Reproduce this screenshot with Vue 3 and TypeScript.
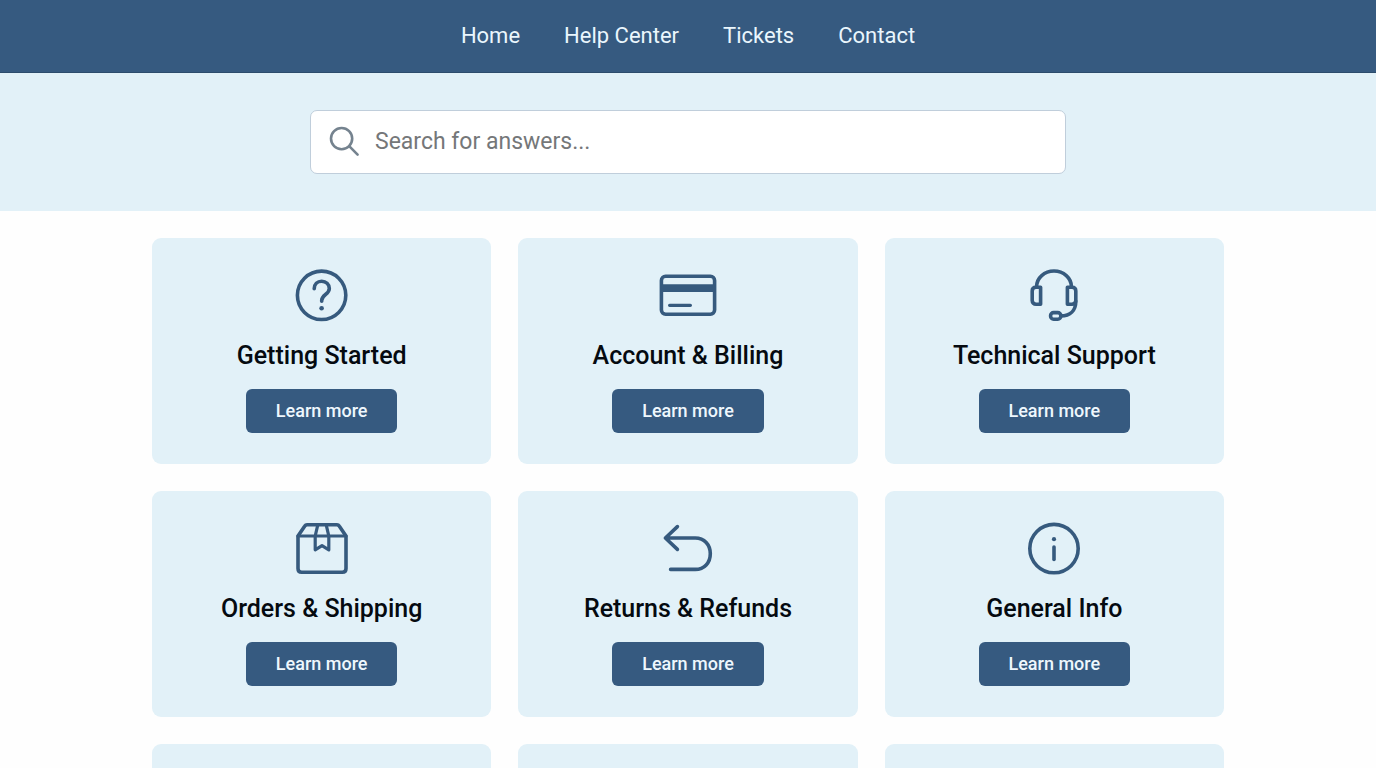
<script setup lang="ts">
type IconName = 'question' | 'card' | 'headset' | 'box' | 'return' | 'info'

interface Topic {
  title: string
  icon: IconName
}

const links: string[] = ['Home', 'Help Center', 'Tickets', 'Contact']

const topics: Topic[] = [
  { title: 'Getting Started', icon: 'question' },
  { title: 'Account & Billing', icon: 'card' },
  { title: 'Technical Support', icon: 'headset' },
  { title: 'Orders & Shipping', icon: 'box' },
  { title: 'Returns & Refunds', icon: 'return' },
  { title: 'General Info', icon: 'info' },
]
</script>

<template>
  <div class="page">
    <header class="topbar">
      <nav class="nav" aria-label="Main">
        <a v-for="link in links" :key="link" class="nav-link" href="#">{{ link }}</a>
      </nav>
    </header>

    <section class="hero">
      <form class="search" role="search" @submit.prevent>
        <label class="search-label" for="search-input">
          <svg class="search-icon" viewBox="0 0 32 32" aria-hidden="true">
            <circle cx="12.6" cy="12.6" r="10.6" />
            <path d="M20.2 20.2 28.6 28.6" />
          </svg>
        </label>
        <input
          id="search-input"
          class="search-input"
          type="text"
          placeholder="Search for answers..."
          aria-label="Search for answers"
        />
      </form>
    </section>

    <main class="topics">
      <article v-for="topic in topics" :key="topic.title" class="card">
        <svg class="icon" viewBox="0 0 80 70" aria-hidden="true">
          <template v-if="topic.icon === 'question'">
            <circle cx="39.6" cy="35.3" r="24.2" />
            <path d="M32.2 28.8c0-4.6 3.2-7.6 7.5-7.6s7.6 3 7.6 7.2c0 6.2-7.6 6-7.6 12.2v.6" />
            <circle class="solid" cx="39.6" cy="48.2" r="2.3" />
          </template>
          <template v-else-if="topic.icon === 'card'">
            <rect x="13.4" y="16.2" width="53.2" height="38" rx="4.2" />
            <path class="solid" d="M13.4 24.2h53.2v7.8h-53.2z" />
            <path class="fine" d="M21.6 45.3h20.8" />
          </template>
          <template v-else-if="topic.icon === 'headset'">
            <path d="M22.6 27.2v-.6a17.4 15.6 0 0 1 34.8 0v.6" />
            <path d="M26.6 27.2v17h-4.6c-2.3 0-3.8-1.5-3.8-3.6v-9.7c0-2.3 1.5-3.7 3.8-3.7z" />
            <path d="M53.4 27.2v17h4.6c2.3 0 3.8-1.5 3.8-3.6v-9.7c0-2.3-1.5-3.7-3.8-3.7z" />
            <path d="M61.8 41.2c0 9-5.4 14.7-15 14.7" />
            <rect x="36.6" y="52.6" width="10.2" height="6.6" rx="3" />
          </template>
          <template v-else-if="topic.icon === 'box'">
            <path d="M16 23 22.8 13c.5-.8 1.2-1.2 2.2-1.2h30c1 0 1.7.4 2.2 1.2L64 23v32.6c0 2.3-1.4 3.7-3.7 3.7H19.7c-2.3 0-3.7-1.4-3.7-3.7z" />
            <path class="fine" d="M16 23h48M35.8 11.8 33.2 23v13.8l6.8-4.1 6.8 4.1V23l-2.6-11.2" />
          </template>
          <template v-else-if="topic.icon === 'return'">
            <path d="M29.4 13.6 17.4 25l12 11.4M17.4 25h29.9c9 0 15 6.7 15 15.7s-6 15.7-15 15.7H22.6" />
          </template>
          <template v-else>
            <circle cx="40" cy="35.6" r="24.2" />
            <circle class="solid" cx="40" cy="26.2" r="2.1" />
            <path d="M40 34v12.4" />
          </template>
        </svg>
        <h2 class="title">{{ topic.title }}</h2>
        <button class="more" type="button">Learn more</button>
      </article>
      <div v-for="n in 3" :key="n" class="card" />
    </main>
  </div>
</template>

<style>
body {
  margin: 0;
  background: #fefefe;
}
</style>

<style scoped>
.page {
  height: 100vh;
  overflow: hidden;
  background: #fefefe;
  color: #050a10;
  font-family: Roboto, "Liberation Sans", sans-serif;
}

.topbar {
  box-sizing: border-box;
  padding: 20px 24px;
  background: #365a80;
  border-bottom: 1px solid #2c4c6c;
}

.nav {
  display: flex;
  justify-content: center;
  gap: 44px;
}

.nav-link {
  color: #eaf6fd;
  font-size: 22px;
  line-height: 32px;
  text-decoration: none;
}

.hero {
  padding: 37px 24px;
  background: #e2f1f8;
}

.search {
  box-sizing: border-box;
  display: flex;
  align-items: center;
  gap: 14px;
  max-width: 756px;
  height: 64px;
  margin: 0 auto;
  padding: 0 18px;
  background: #fff;
  border: 1px solid #c0cedb;
  border-radius: 7px;
}

.search-label {
  display: flex;
}

.search-icon {
  width: 32px;
  height: 32px;
  fill: none;
  stroke: #75838f;
  stroke-width: 2.6;
  stroke-linecap: round;
}

.search-input {
  flex: 1;
  min-width: 0;
  padding: 0;
  border: 0;
  outline: 0;
  background: transparent;
  color: #1d2b38;
  font-family: inherit;
  font-size: 23px;
  line-height: 32px;
}

.search-input::placeholder {
  color: #757779;
  opacity: 1;
}

.topics {
  display: grid;
  grid-template-columns: repeat(3, 1fr);
  gap: 27px;
  max-width: 1072px;
  margin: 0 auto;
  padding: 27px 24px;
}

.card {
  box-sizing: border-box;
  display: flex;
  flex-direction: column;
  align-items: center;
  min-height: 226px;
  padding: 22px 16px 31px;
  background: #e2f1f8;
  border-radius: 9px;
}

.icon {
  width: 80px;
  height: 70px;
  fill: none;
  stroke: #365a7e;
  stroke-width: 3.6;
  stroke-linecap: round;
  stroke-linejoin: round;
}

.icon .fine {
  stroke-width: 3.2;
}

.icon .solid {
  fill: #365a7e;
  stroke: none;
}

.title {
  margin: 11px 0 18px;
  font-size: 25px;
  font-weight: 500;
  line-height: 30px;
  text-align: center;
}

.more {
  height: 44px;
  padding: 0 30px;
  border: 0;
  border-radius: 6px;
  background: #365a80;
  color: #eef7fd;
  font-family: inherit;
  font-size: 18px;
  font-weight: 500;
  line-height: 24px;
  cursor: pointer;
}
</style>
